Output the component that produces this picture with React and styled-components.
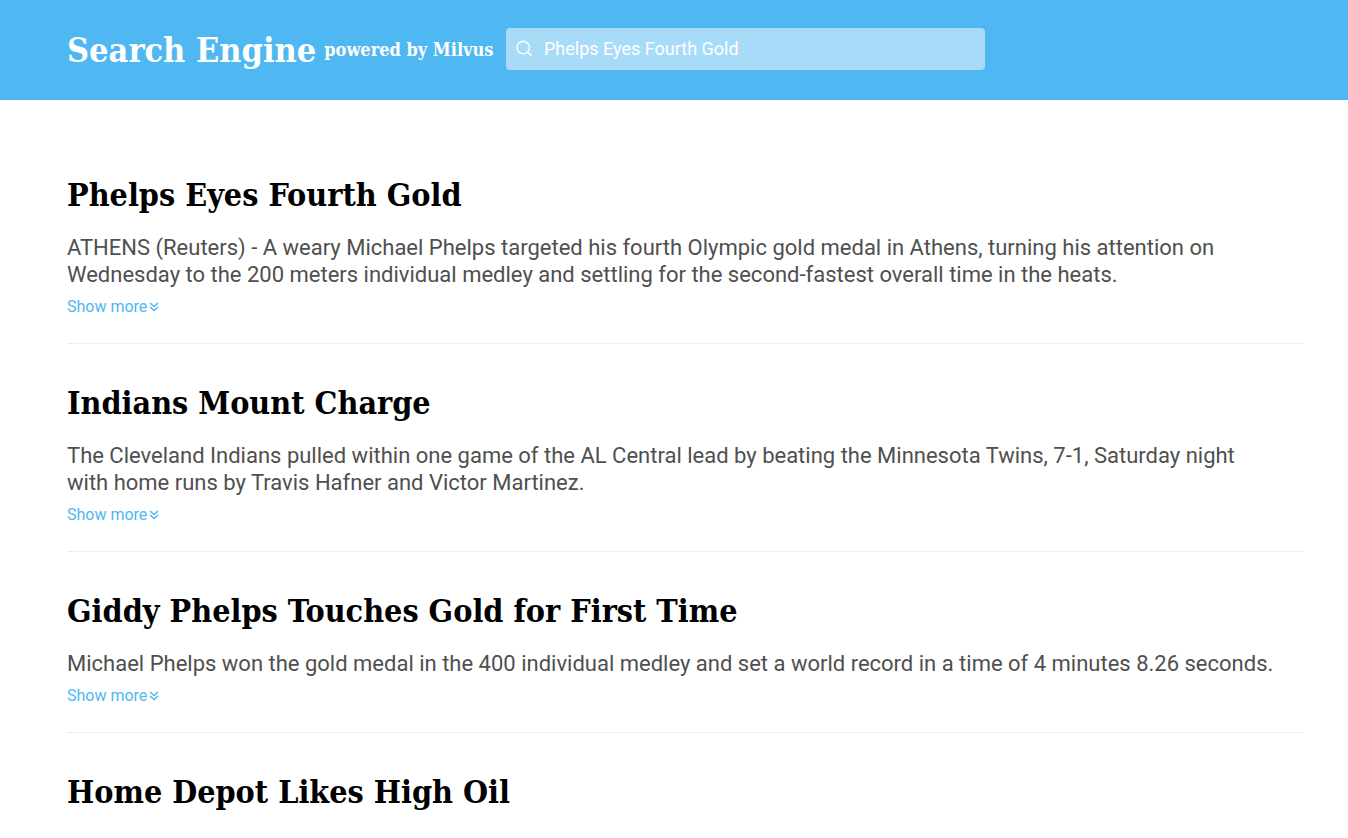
import React, { useState } from "react";
import styled, { createGlobalStyle } from "styled-components";

const slab = '"Roboto Slab", "DejaVu Serif Condensed", "DejaVu Serif", serif';

const GlobalStyle = createGlobalStyle`
  * { box-sizing: border-box; }
  body {
    margin: 0;
    background: #ffffff;
    font-family: Roboto, "Liberation Sans", sans-serif;
  }
`;

const Page = styled.div`
  height: 100vh;
  overflow: hidden;
`;

const Header = styled.header`
  display: flex;
  align-items: center;
  height: 100px;
  padding: 0 67px;
  background: #4fb7f1;
  color: #ffffff;
`;

const Brand = styled.h1`
  display: flex;
  align-items: center;
  gap: 8px;
  width: 439px;
  flex: none;
  margin: 0;
  font-family: ${slab};
  font-size: 34px;
  line-height: 48px;
  font-weight: 700;
  white-space: nowrap;
`;

const Tagline = styled.small`
  font-size: 18px;
`;

const SearchBox = styled.label`
  display: flex;
  align-items: center;
  gap: 11px;
  flex: 0 1 479px;
  height: 42px;
  margin-bottom: 2px;
  padding: 0 10px 2px;
  border-radius: 4px;
  background: #a7dbf8;
`;

const SearchInput = styled.input`
  flex: 1;
  min-width: 0;
  padding: 0;
  border: 0;
  outline: 0;
  background: transparent;
  color: #ffffff;
  font-family: inherit;
  font-size: 18px;
`;

const Results = styled.main`
  padding: 36px 44px 0 67px;
`;

const Result = styled.article`
  padding: 36px 0 27px;
  border-bottom: 1px dotted #dddddd;
`;

const Title = styled.h2`
  margin: 0 0 15px;
  font-family: ${slab};
  font-size: 32px;
  line-height: 47px;
  font-weight: 700;
  color: #000000;
`;

const Summary = styled.p`
  margin: 0 0 9px;
  padding-right: 26px;
  font-size: 22px;
  line-height: 27px;
  color: #4f4f4f;
`;

const MoreButton = styled.button`
  display: flex;
  align-items: center;
  gap: 2px;
  padding: 0;
  border: 0;
  background: transparent;
  color: #4fb7f1;
  font-family: inherit;
  font-size: 16px;
  line-height: 19px;
  cursor: pointer;
`;

const results = [
  {
    title: "Phelps Eyes Fourth Gold",
    text: "ATHENS (Reuters) - A weary Michael Phelps targeted his fourth Olympic gold medal in Athens, turning his attention on Wednesday to the 200 meters individual medley and settling for the second-fastest overall time in the heats.",
  },
  {
    title: "Indians Mount Charge",
    text: "The Cleveland Indians pulled within one game of the AL Central lead by beating the Minnesota Twins, 7-1, Saturday night with home runs by Travis Hafner and Victor Martinez.",
  },
  {
    title: "Giddy Phelps Touches Gold for First Time",
    text: "Michael Phelps won the gold medal in the 400 individual medley and set a world record in a time of 4 minutes 8.26 seconds.",
  },
  { title: "Home Depot Likes High Oil" },
];

const SearchIcon = () => (
  <svg width="17" height="17" viewBox="0 0 17 17" fill="none" stroke="currentColor" strokeWidth="1.4" aria-hidden="true">
    <circle cx="7.2" cy="7.6" r="6.3" />
    <path d="M11.7 12.1 15.4 15.8" />
  </svg>
);

const ChevronsIcon = () => (
  <svg width="10" height="10" viewBox="0 0 10 10" fill="none" stroke="currentColor" strokeWidth="1.4" aria-hidden="true">
    <path d="M1 1 5 4.5 9 1M1 5 5 8.5 9 5" />
  </svg>
);

export default function App() {
  const [query, setQuery] = useState("Phelps Eyes Fourth Gold");
  return (
    <Page>
      <GlobalStyle />
      <Header>
        <Brand>
          Search Engine <Tagline>powered by Milvus</Tagline>
        </Brand>
        <SearchBox>
          <SearchIcon />
          <SearchInput aria-label="Search" value={query} onChange={(e) => setQuery(e.target.value)} />
        </SearchBox>
      </Header>
      <Results>
        {results.map(({ title, text }) => (
          <Result key={title}>
            <Title>{title}</Title>
            {text && (
              <>
                <Summary>{text}</Summary>
                <MoreButton type="button">
                  Show more
                  <ChevronsIcon />
                </MoreButton>
              </>
            )}
          </Result>
        ))}
      </Results>
    </Page>
  );
}
